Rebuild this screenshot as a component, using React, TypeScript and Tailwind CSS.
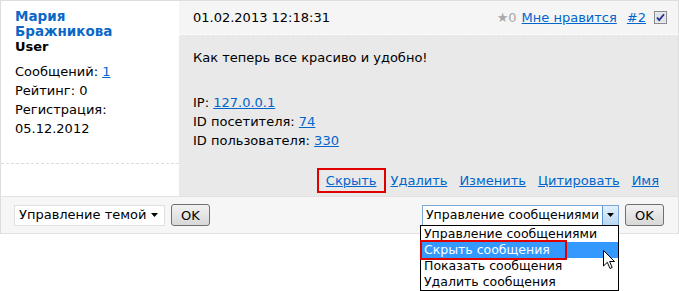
import React from 'react';

const link = 'text-[#0066cc] underline';

function Checkbox() {
  return (
    <svg width="13" height="13" viewBox="0 0 13 13">
      <rect x="0.5" y="0.5" width="12" height="12" fill="#f3f3f3" stroke="#8a8a8a" />
      <rect x="1.5" y="1.5" width="10" height="10" fill="#dfe3ea" />
      <path d="M3 6.5 L5.2 9 L10 3.2" fill="none" stroke="#23308f" strokeWidth="1.8" />
    </svg>
  );
}

function Arrow() {
  return (
    <svg width="7" height="4" viewBox="0 0 7 4">
      <path d="M0 0 H7 L3.5 4 Z" fill="#000" />
    </svg>
  );
}

function Cursor() {
  return (
    <svg width="13" height="20" viewBox="0 0 13 20" className="absolute left-[603px] top-[250px]">
      <path d="M0.5 0.5 L0.5 16 L4.3 12.3 L7 18.5 L9.2 17.5 L6.6 11.5 L11.5 11.5 Z" fill="#fff" stroke="#000" strokeWidth="1" />
    </svg>
  );
}

function OkButton() {
  return (
    <div className="w-[39px] h-[22px] rounded-[3px] border border-[#707070] bg-gradient-to-b from-[#f2f2f2] to-[#d8d8d8] flex items-center justify-center text-[13px] leading-none">
      OK
    </div>
  );
}

export default function App() {
  return (
    <div className="relative w-[679px] h-[291px] bg-white text-[13px] text-black font-['DejaVu_Sans',sans-serif]">
      <div className="border-t border-l border-r border-[#dedede]">
        <div className="flex h-[195px]">
          {/* Автор */}
          <div className="w-[178px] bg-white">
            <div className="h-[163px] border-b border-dashed border-[#dcdcdc] pl-[14px] pt-[8px]">
              <div className="font-bold text-[#0b68c6] text-[13.5px] leading-[15px]">
                Мария<br />Бражникова
              </div>
              <div className="font-bold leading-[16px]">User</div>
              <div className="mt-[7px] leading-[19px]">
                <div>
                  Сообщений: <span className={link}>1</span>
                </div>
                <div>Рейтинг: 0</div>
                <div>Регистрация:</div>
                <div>05.12.2012</div>
              </div>
            </div>
          </div>

          {/* Сообщение */}
          <div className="flex-1 flex flex-col">
            <div className="h-[34px] bg-[#f5f5f5] border-b border-dashed border-white flex items-center pl-[14px] pr-[11px]">
              <span>01.02.2013 12:18:31</span>
              <div className="ml-auto flex items-center">
                <span className="text-[#a8a8a8]">★0</span>
                <span className={`${link} ml-[5px]`}>Мне нравится</span>
                <span className={`${link} ml-[10px]`}>#2</span>
                <span className="ml-[8px] flex">
                  <Checkbox />
                </span>
              </div>
            </div>
            <div className="flex-1 bg-[#e9e9e9] flex flex-col pl-[14px] pr-[19px]">
              <div className="pt-[13px] leading-[19px]">Как теперь все красиво и удобно!</div>
              <div className="mt-[26px] leading-[19px]">
                <div>
                  IP: <span className={link}>127.0.0.1</span>
                </div>
                <div>
                  ID посетителя: <span className={link}>74</span>
                </div>
                <div>
                  ID пользователя: <span className={link}>330</span>
                </div>
              </div>
              <div className="mt-auto mb-[3px] flex items-center justify-end whitespace-nowrap">
                <span className="border-2 border-[#e00000] h-[25px] px-[7px] flex items-center">
                  <span className={link}>Скрыть</span>
                </span>
                <span className={`${link} ml-[5px]`}>Удалить</span>
                <span className={`${link} ml-[12px]`}>Изменить</span>
                <span className={`${link} ml-[12px]`}>Цитировать</span>
                <span className={`${link} ml-[12px]`}>Имя</span>
              </div>
            </div>
          </div>
        </div>

        {/* Панель управления */}
        <div className="h-[38px] bg-[#f6f6f6] border-t border-b border-[#e2e2e2] flex items-center pl-[13px] pr-[14px]">
          <div className="w-[151px] h-[21px] bg-white border border-[#e0e0e0] flex items-center pl-[4px] pr-[6px] whitespace-nowrap">
            <span>Управление темой</span>
            <span className="ml-auto flex">
              <Arrow />
            </span>
          </div>
          <div className="ml-[6px]">
            <OkButton />
          </div>
          <div className="ml-auto w-[197px] h-[21px] bg-white border border-[#7aa7d6] flex items-center pl-[3px] text-[12.5px] whitespace-nowrap">
            <span>Управление сообщениями</span>
            <span className="ml-auto h-full w-[16px] border-l border-[#5c93c9] bg-gradient-to-b from-[#e3f0fb] to-[#b9d7f3] flex items-center justify-center">
              <Arrow />
            </span>
          </div>
          <div className="ml-[6px]">
            <OkButton />
          </div>
        </div>
      </div>

      {/* Выпадающий список */}
      <div className="absolute left-[420px] top-[225px] w-[199px] border border-black bg-white text-[12.5px] leading-[16px] whitespace-nowrap">
        <div className="pl-[3px]">Управление сообщениями</div>
        <div className="pl-[3px] bg-[#3399ff] text-white">Скрыть сообщения</div>
        <div className="pl-[3px]">Показать сообщения</div>
        <div className="pl-[3px]">Удалить сообщения</div>
      </div>
      <div className="absolute left-[420px] top-[240px] w-[147px] h-[20px] border-2 border-[#e00000]" />
      <Cursor />
    </div>
  );
}
